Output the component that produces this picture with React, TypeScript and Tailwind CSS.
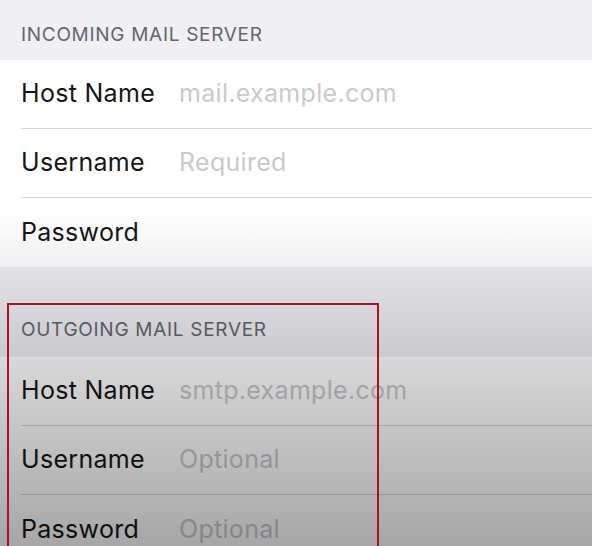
import React from "react";

type Field = { label: string; placeholder?: string };

const incoming: Field[] = [
  { label: "Host Name", placeholder: "mail.example.com" },
  { label: "Username", placeholder: "Required" },
  { label: "Password" },
];

const outgoing: Field[] = [
  { label: "Host Name", placeholder: "smtp.example.com" },
  { label: "Username", placeholder: "Optional" },
  { label: "Password", placeholder: "Optional" },
];

function Section({ fields }: { fields: Field[] }) {
  return (
    <div className="bg-white">
      {fields.map((f, i) => (
        <div key={f.label} className="pl-[21px]">
          <div
            className={`flex items-center h-[69px] ${
              i < fields.length - 1 ? "border-b border-[#d6d5da]" : ""
            }`}
          >
            <div className="w-[158px] text-[25px] text-[#161616] tracking-[0.3px]">{f.label}</div>
            {f.placeholder && (
              <div className="text-[25px] text-[#c9c9ce] tracking-[0.3px]">{f.placeholder}</div>
            )}
          </div>
        </div>
      ))}
    </div>
  );
}

export default function App() {
  return (
    <div
      className="relative w-[592px] h-[546px] overflow-hidden bg-[#efeff4]"
      style={{ fontFamily: "Inter, 'Liberation Sans', sans-serif" }}
    >
      <div className="flex items-center h-[60px] pt-[10px] pl-[21px] text-[19px] text-[#66666b] tracking-[0.7px]">
        INCOMING MAIL SERVER
      </div>
      <Section fields={incoming} />
      <div className="flex items-end h-[90px] pb-[13px] pl-[21px] text-[19px] text-[#66666b] tracking-[0.7px]">
        OUTGOING MAIL SERVER
      </div>
      <Section fields={outgoing} />

      {/* video darkening */}
      <div className="absolute inset-0 pointer-events-none bg-[linear-gradient(to_bottom,rgba(0,0,0,0)_0px,rgba(0,0,0,0)_210px,rgba(0,0,0,0.35)_546px)]" />

      {/* highlight box */}
      <div className="absolute left-[7px] top-[303px] w-[372px] h-[300px] border-2 border-[#a8131c] pointer-events-none" />
    </div>
  );
}
